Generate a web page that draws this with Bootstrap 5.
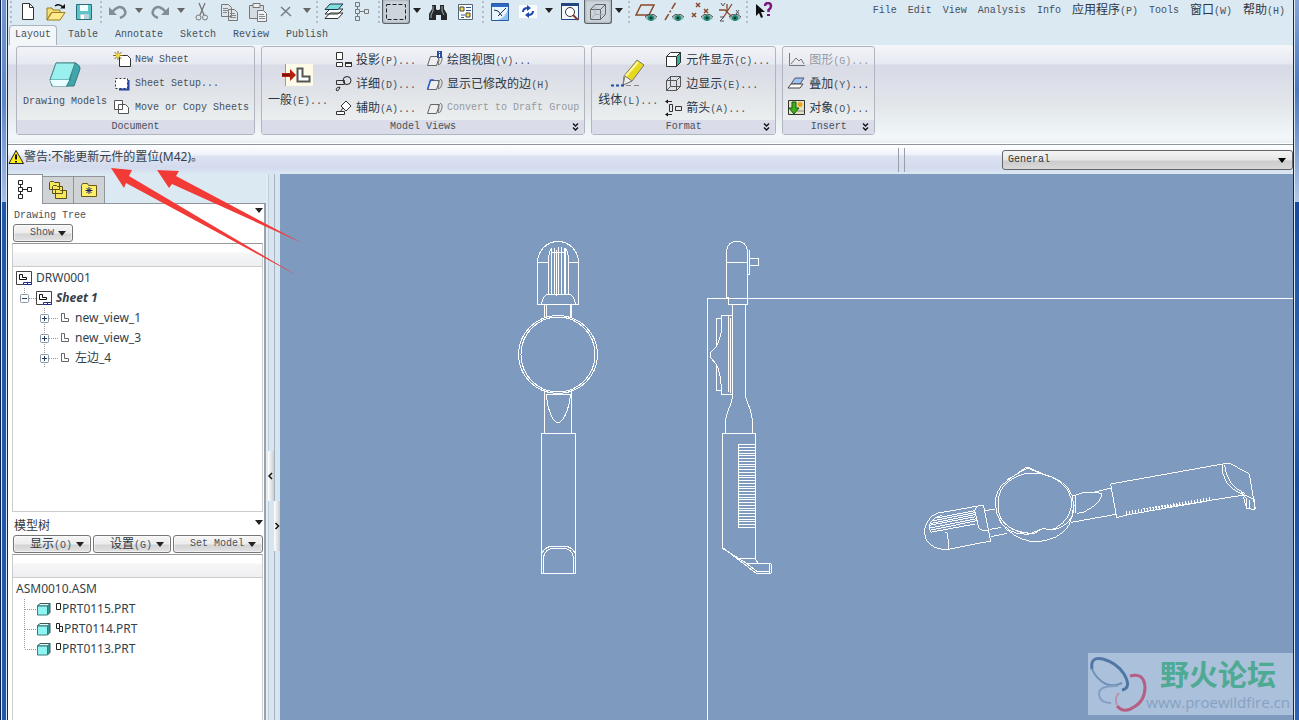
<!DOCTYPE html>
<html lang="zh-CN">
<head>
<meta charset="utf-8">
<meta name="viewport" content="width=device-width, initial-scale=1">
<title>DRW0001</title>
<link href="https://cdn.jsdelivr.net/npm/bootstrap@5.3.0/dist/css/bootstrap.min.css" rel="stylesheet">
<style>
body{font:10px/14px "Liberation Mono","Noto Sans CJK SC",monospace;color:#46515b;background:#dbe9f3;overflow:hidden}
a{color:inherit;text-decoration:none}
button{font:inherit;color:inherit;background:none;border:0;padding:0}
svg{display:block;flex:none}
.zh{font-size:12px;line-height:14px;font-family:"Noto Sans CJK SC",sans-serif;color:#2c3742}
.edge-l{width:8px;flex:none;background:linear-gradient(90deg,#0a2350 0 1px,#dbe9f8 1px 2px,transparent 2px 6px,#dbe9f8 6px 7px,#12294e 7px 8px),linear-gradient(#7795cc 0,#5c86c8 100px,#a9bfe4 202px,#2057ab 202px)}
.edge-r{width:6px;flex:none;background:linear-gradient(90deg,#12294e 0 1px,#dbe9f8 1px 2px,transparent 2px),linear-gradient(#85a5d8 0,#4a78bf 90px,#b4c8e8 202px,#174a9c 202px,#3268b5 380px,#1a4fa3 480px,#2e63b3 720px)}
.app,.canvas{min-width:0}
.work{min-height:0}
.tool-strip{height:25px}
.tool-strip .tb{width:28px;height:24px;display:flex;align-items:center;justify-content:center;overflow:hidden}
.tool-strip .tb.on{border:1px solid #5b6168;border-top:0;border-radius:0 0 3px 3px;background:#cdd5dc;box-shadow:inset 0 0 3px #8d959d}
.tool-strip .dd{width:14px;height:20px;display:flex;align-items:center;justify-content:center}
.caret{width:0;height:0;border:4px solid transparent;border-top:5px solid #222;border-bottom:0;flex:none}
.caret.dim{border-top-color:#666}
.grip{width:6px;height:24px;background:radial-gradient(circle at 3px 2px,#b3bcc6 1px,transparent 1px) 0 0/6px 5px}
.menus{gap:11px;padding-right:8px;height:21px}
.tabs-row{gap:5px;height:20px;padding-left:1px}
.tabs-row a{padding:3px 6px;height:20px}
.tabs-row a.on{border:1px solid #a9b3bb;border-bottom:0;border-radius:4px 4px 0 0;background:#f2f6f9;padding:2px 5px}
.ribbon{height:99px;padding:1px 8px 0;gap:6px;background:linear-gradient(#f4f6f9,#e6e9f2 19px,#d7dae7 20px,#e2e6ea 60px,#f2f7f9 92px,#e8eef3 98px,#fff 98px);border-radius:3px 3px 0 0}
.rpanel{border:1px solid #b1b5bf;border-radius:3px;height:89px;background:linear-gradient(#f2f3f7,#e7e9f1 17px,#d9dbe6 18px,#e0e3e8 45px,#ecefef 73px)}
.rpanel footer{height:14px;background:#dadce9;text-align:center;position:relative}
.rpanel .more{position:absolute;right:5px;top:3px}
.rbody{height:73px}
.big{padding:0 6px 8px;height:73px}
.big svg{margin-top:12px}
.big .t,.big .t .zh{line-height:20px;white-space:nowrap}
.rcol{padding:1px 5px 0 0}
.rcol button{height:24px;gap:2px;display:flex;align-items:center;white-space:nowrap}
.off,.off .zh{color:#939aa0}
.msg{height:30px;border-top:1px solid #90969e;background:linear-gradient(#fff,#eef1fa 10px,#dde2f1 11px,#d3dbee 23px,#dce8f3 29px)}
.msg .info{padding-top:2px}
.msg .dbl{width:7px;height:24px;margin-top:3px;border:solid #999fa8;border-width:0 1px;margin-right:97px}
.uitxt{font:12px/20px "Noto Sans","Noto Sans CJK SC",sans-serif;color:#333f4a}
.genwrap{margin-top:5px}
.genbox{width:291px;height:20px;border:1px solid #666;border-radius:3px;padding:0 5px;font:inherit;color:#333;background:linear-gradient(#f4f4f4,#e6e6e6 9px,#ccc 10px,#d8d8d8);appearance:none}
.genwrap::after{content:"";position:absolute;right:7px;top:8px;border:4px solid transparent;border-top:5px solid #000;border-bottom:0}
.side{width:258px;flex:none}
.stabs{height:30px}
.stabs button{width:31px;height:28px;margin-top:2px;display:flex;align-items:center;justify-content:center;border:1px solid #8f959b;border-left:0;background:#cfd3d6}
.stabs button.on{width:35px;height:30px;margin:0;background:#fff;border-width:1px 1px 0 0}
.stabs .rest{border-bottom:1px solid #8f959b}
.sbody{background:#fff;border-right:2px solid #9aa3ac;padding:0 1px 0 4px}
.ttl{padding:1px 0 0 2px}
.ttl.low{padding:2px 0 3px 2px}
.btnrow{gap:2px;padding:0 0 1px 1px}
.btnrow.first{padding-top:1px}
.gbtn{border:1px solid #777;border-radius:3px;height:18px;background:linear-gradient(#f6f6f6,#ececec 8px,#d3d3d3 9px,#e2e2e2);display:flex;align-items:center;justify-content:flex-end;padding-right:6px;gap:4px;box-shadow:inset 0 0 0 1px #fff8}
.w-show{width:60px}.w-cmd{width:78px}
.tree{border:1px solid #ccc;border-top-color:#999}
.tree.upper{height:269px}
.tree .hd{height:23px;background:linear-gradient(#fff 8px,#f6f6f7 9px,#eeeff1);border-bottom:1px solid #ccc}
.tree ul{list-style:none;margin:0;padding:1px 0 0 3px}
.tree li{display:flex;align-items:center;height:20px;white-space:nowrap}
.tree .kids{padding-left:20px}
.sash{width:14px;flex:none;background:linear-gradient(90deg,#e3edf5 0 2px,#c1cdd8 2px 3px,#d6e5f0 3px 8px,#a7b4c0 8px 9px,#d4e6f2 9px)}
.sash button{position:absolute;width:6px;height:50px;background:linear-gradient(90deg,#fff,#c9ccd0);display:flex;align-items:center}
.sash .h1b{left:2px;top:277px}.sash .h2b{right:0;top:327px}
.canvas{background:#7e9bbf;overflow:hidden}
.wm{right:0;bottom:5px;width:205px;height:62px;background:#abc0da}
.wm b{font:bold 29px/34px "Noto Sans CJK SC",sans-serif;color:#4eaa92;right:17px;top:3px;position:absolute;white-space:nowrap}
.wm span{font:15px/20px "Open Sans",sans-serif;color:#84a2c2;position:absolute;right:3px;top:39px}
.marks{left:0;top:0;pointer-events:none}
</style>
</head>
<body>
<svg width="0" height="0" class="position-absolute">
<defs>
<symbol id="eye" viewBox="0 0 12 8"><path d="M0 4Q6-2 12 4Q6 10 0 4z" fill="#8aa"/><circle cx="6" cy="4" r="3" fill="#1c8a70"/><circle cx="6" cy="4" r="1.3" fill="#032"/><path d="M0 3Q6-3 12 3" fill="none" stroke="#444"/></symbol>
<symbol id="drw" viewBox="0 0 16 16"><path d="M.5 1.500h15v13H.5z" fill="#fff" stroke="#444"/><path d="M3.500 4.500v5h7v-2h-4v-3z" fill="none" stroke="#111"/><path d="M7.500 12.500h8v2h-8zM11.500 12v2" fill="#fff" stroke="#1c2b8c"/></symbol>
<symbol id="ell" viewBox="0 0 12 12"><path d="M1.500 1.500h3v5h4v3h-7z" fill="none" stroke="#666"/></symbol>
<symbol id="plus" viewBox="0 0 24 20"><path d="M8.500 0v20" stroke="#999" stroke-dasharray="1 1"/><path d="M13 10.500h9" stroke="#999" stroke-dasharray="1 1"/><rect x="4.500" y="6.500" width="8" height="8" rx="1" fill="#fff" stroke="#8a97a6"/><path d="M6 10.500h5M8.500 8v5" stroke="#223a66"/></symbol>
<symbol id="pline" viewBox="0 0 21 20"><path d="M8.500 0v20M9 10.500h12" stroke="#999" stroke-dasharray="1 1"/></symbol>
<symbol id="prt" viewBox="0 0 14 14"><path d="M.5 4L3 1.500h10v9L10.500 13" fill="#2f9a98" stroke="#3a5a5a"/><path d="M.5 4L3 1.500h10L10.500 4z" fill="#d8ffff" stroke="#3a5a5a"/><path d="M.5 4h10v9H.5z" fill="#8ff5f2" stroke="#3a7a7a"/></symbol>
<symbol id="slab" viewBox="0 0 20 18"><path d="M5.500 5.500h9l-3 9h-9z" fill="#eee" stroke="#666"/><path d="M15 4q3 1 2 5-1 5-4 5M13 6q2 2 0 8" fill="none" stroke="#777"/></symbol>
<symbol id="chev" viewBox="0 0 7 8"><path d="M1 .5l2.500 2.500L6 .5M1 4.500L3.500 7 6 4.500" fill="none" stroke="#111" stroke-width="1.400"/></symbol>
</defs>
</svg>

<div class="d-flex vh-100 position-relative">
<div class="edge-l"></div>
<div class="app d-flex flex-column flex-fill">

<header class="tool-strip d-flex">
<div class="d-flex flex-fill" role="toolbar" aria-label="Quick tools">
<i class="grip"></i>
<button class="tb" aria-label="New"><svg width="14" height="18"><path d="M1.500.5h7l4 4v12h-11z" fill="#fff" stroke="#333"/><path d="M8.500.5v4h4" fill="none" stroke="#333"/></svg></button>
<button class="tb" aria-label="Open"><svg width="20" height="18"><path d="M1 6V5h5l1 2h7v3H5L1 17z" fill="#f4df7a" stroke="#9a7b1d"/><path d="M1 17L6 9.500h13L14 17z" fill="#ffe98a" stroke="#9a7b1d"/><path d="M9 3q4-3 8 1" fill="none" stroke="#111" stroke-width="1.500"/><path d="M14 5.500h5V1z" fill="#111"/></svg></button>
<button class="tb" aria-label="Save"><svg width="16" height="16"><path d="M.5.5h15v15H.5z" fill="#5cc4c8" stroke="#256f78"/><path d="M4 1h8v6H4z" fill="#f0ffff"/><path d="M4 10h9v5H4z" fill="#b9d4da"/><path d="M5 11h3v4H5z" fill="#fff"/></svg></button>
<i class="grip"></i>
<button class="tb" aria-label="Undo"><svg width="20" height="14"><path d="M4 7Q11-1 16 4q4 6-4 9" fill="none" stroke="#858d94" stroke-width="2.500"/><path d="M1 2v8h8z" fill="#858d94"/></svg></button>
<button class="dd" aria-label="Undo list"><i class="caret dim"></i></button>
<button class="tb" aria-label="Redo"><svg width="20" height="14"><path d="M16 7Q9-1 4 4q-4 6 4 9" fill="none" stroke="#858d94" stroke-width="2.500"/><path d="M19 2v8h-8z" fill="#858d94"/></svg></button>
<button class="dd" aria-label="Redo list"><i class="caret dim"></i></button>
<button class="tb" aria-label="Cut"><svg width="14" height="20"><path d="M4 1l5 12M10 1L5 13" stroke="#777" stroke-width="1.300"/><circle cx="3.500" cy="15.500" r="2.500" fill="none" stroke="#777"/><circle cx="10" cy="15.500" r="2.500" fill="none" stroke="#777"/></svg></button>
<button class="tb" aria-label="Copy"><svg width="18" height="20"><path d="M.5 2.500h7l3 3v9H.5zM7.500 7.500h6l3 3v8h-9z" fill="#dfe6eb" stroke="#777"/><path d="M2 6.500h5M2 8.500h5M2 10.500h4M9 11.500h5M9 13.500h6M9 15.500h6" stroke="#888"/></svg></button>
<button class="tb" aria-label="Paste"><svg width="20" height="20"><path d="M1.500 3.500h14v13h-14z" fill="#d5dce2" stroke="#777"/><path d="M5 1.500h7v4H5z" fill="#eee" stroke="#777"/><path d="M9.500 8.500h6l3 3v8h-9z" fill="#eef2f5" stroke="#777"/><path d="M11 12.500h5M11 14.500h6M11 16.500h6" stroke="#888"/></svg></button>
<button class="tb" aria-label="Delete"><svg width="12" height="12"><path d="M1 1l10 9M10 1L1 10" stroke="#767d84" stroke-width="1.500"/></svg></button>
<button class="dd" aria-label="Delete list"><i class="caret dim"></i></button>
<i class="grip"></i>
<button class="tb" aria-label="Layers"><svg width="20" height="18"><path d="M1 15.500L6 10h13l-5 5.500zM1 11L6 6h13l-5 5z" fill="#fff" stroke="#333"/><path d="M1 6.500L6 1h13l-5 5.500z" fill="#7ce0d8" stroke="#235"/></svg></button>
<button class="tb" aria-label="Tree"><svg width="14" height="20"><path d="M.5.500h4v4h-4zM.5 7.500h4v4h-4zM.5 14.500h4v4h-4zM9.500 7.500h4v4h-4zM4.500 9.500h5M2.500 4v4M2.500 11v4" fill="none" stroke="#777"/></svg></button>
<i class="grip"></i>
<button class="tb on" aria-label="Select"><svg width="20" height="16"><path d="M.5.500h19v15H.5z" fill="none" stroke="#222" stroke-dasharray="4 2"/></svg></button>
<button class="dd" aria-label="Select list"><i class="caret"></i></button>
<button class="tb" aria-label="Find"><svg width="18" height="16"><path d="M3 1h4v4l1 1h2l1-1V1h4v4l3 5v6h-6v-5H7v5H0v-6l3-5z" fill="#25282b"/><path d="M4 2v5l-2 4v3M13 2v5l2 4" stroke="#a9adb0" fill="none"/></svg></button>
<button class="tb" aria-label="Settings"><svg width="16" height="17"><path d="M.5.500h14v15h-14z" fill="#fff" stroke="#567"/><path d="M2 3h4v4H2z" fill="#f5e04a" stroke="#444"/><path d="M8 3.500h5M8 6.500h5M3 11h4M3 13.500h3" stroke="#2b55a8"/><path d="M8 9h4v4H8z" fill="#f5e04a" stroke="#444"/></svg></button>
<i class="grip"></i>
<button class="tb" aria-label="Repaint"><svg width="18" height="18"><path d="M.5.500h17v17H.5z" fill="#eaf6ff" stroke="#2a5aa5"/><path d="M1 1h16v3H1z" fill="#2f69c0"/><path d="M6 17q9-2 11-12v12z" fill="#8fc4ee"/><path d="M3 7l4 1 4 5M7 13l8-8" stroke="#234" fill="none"/></svg></button>
<button class="tb" aria-label="Refresh"><svg width="18" height="16"><path d="M0 1h18v13H0z" fill="#fbfdff"/><path d="M4 8q0-4 5-4M14 7q0 4-5 4" fill="none" stroke="#1c4aa8" stroke-width="2"/><path d="M8 1v6l4-3zM10 8v6l-4-3z" fill="#1c4aa8"/></svg></button>
<button class="dd" aria-label="Refresh list"><i class="caret"></i></button>
<button class="tb" aria-label="Zoom"><svg width="18" height="18"><path d="M.5.500h17v16H.5z" fill="#f4f8fb" stroke="#24457f"/><path d="M0 0h18v3H0z" fill="#24457f"/><circle cx="9" cy="9" r="4.500" fill="#fff" stroke="#333"/><path d="M12 12l5 5" stroke="#8c3b22" stroke-width="2"/></svg></button>
<button class="tb on" aria-label="Wireframe"><svg width="16" height="16"><path d="M.5 5.500h10v10H.5zM.5 5.500L5 .5h10.500l-5 5M15.500.5v10l-5 5" fill="none" stroke="#666"/><path d="M5 .5v10M5 10.500h10M5 10.500l-4.500 5" fill="none" stroke="#a9b0b6"/></svg></button>
<button class="dd" aria-label="Display list"><i class="caret"></i></button>
<i class="grip"></i>
<button class="tb" aria-label="Planes"><svg width="22" height="20"><path d="M1 13L6 3h13l-5 10z" fill="none" stroke="#8a4a2a" stroke-width="1.500"/><use href="#eye" x="10" y="12" width="12" height="8"/></svg></button>
<button class="tb" aria-label="Axes"><svg width="20" height="20"><path d="M1 18L12 0" stroke="#8a4a2a" stroke-width="1.500" stroke-dasharray="7 2 2 2"/><use href="#eye" x="8" y="12" width="12" height="8"/></svg></button>
<button class="tb" aria-label="Points"><svg width="22" height="20"><path d="M5 1l4 4M9 1L5 5M1 11l4 4M5 11l-4 4M13 7l4 4M17 7l-4 4" stroke="#8a4a2a" stroke-width="1.500"/><use href="#eye" x="10" y="12" width="12" height="8"/></svg></button>
<button class="tb" aria-label="Coordinate systems"><svg width="22" height="20"><path d="M0 8h6l8 8M4 16L13 2M8 2v7" stroke="#8a4a2a" stroke-width="1.300" fill="none"/><path d="M2 1l2 3 2-3M17 8l3 4M20 8l-3 4M1 15h4l-4 4h4" stroke="#555" fill="none"/><use href="#eye" x="10" y="12" width="12" height="8"/></svg></button>
<i class="grip"></i>
<button class="tb pb-1" aria-label="Help pointer"><svg width="18" height="16"><path d="M1 2v12l3-3 2 5 2-1-2-5h4z" fill="#111"/><path d="M10 4q0-3 3-3t3 3q0 2-2.500 4v2" fill="none" stroke="#7a1778" stroke-width="2.500"/><path d="M12 12h3v2h-3z" fill="#7a1778"/></svg></button>
</div>
<nav class="menus d-flex align-items-center text-nowrap">
<a href="#">File</a><a href="#">Edit</a><a href="#">View</a><a href="#">Analysis</a><a href="#">Info</a><a href="#"><span class="zh">应用程序</span>(P)</a><a href="#">Tools</a><a href="#"><span class="zh">窗口</span>(W)</a><a href="#"><span class="zh">帮助</span>(H)</a>
</nav>
</header>

<nav class="tabs-row d-flex"><a class="on" href="#">Layout</a><a href="#">Table</a><a href="#">Annotate</a><a href="#">Sketch</a><a href="#">Review</a><a href="#">Publish</a></nav>

<section class="ribbon d-flex">
<div class="rpanel"><div class="rbody d-flex">
<button class="big d-flex flex-column align-items-center justify-content-between"><svg width="34" height="30"><path d="M8 4h20l-4 19-4 4H4l-2-6z" fill="#86e6e4" stroke="#4a8a8c"/><path d="M26 4q6 1 6 6l-6 17h-8l4-6z" fill="#3fa7ab" stroke="#35787c"/><path d="M8 4h19l-6 17H2z" fill="#9af0ee" stroke="#4a8a8c"/><path d="M2 21h19l-3 6H5z" fill="#eaffff"/></svg><span class="t">Drawing Models</span></button>
<div class="rcol">
<button><svg width="20" height="18"><path d="M6.500 4.500h8l3 3v8h-11z" fill="#fff" stroke="#333"/><path d="M5 0v9M0 4.500h10M1.500 1l7 7M8.500 1l-7 7" stroke="#8a6a12"/><circle cx="5" cy="4.500" r="2" fill="#f5d92a"/></svg>New Sheet</button>
<button><svg width="20" height="18"><path d="M2.500 3.500h12v10h-12z" fill="#fff" stroke="#333" stroke-dasharray="2 2"/><path d="M15.500 5v9.500H6" fill="none" stroke="#2746a0" stroke-width="2"/></svg>Sheet Setup...</button>
<button><svg width="20" height="18"><path d="M1.500 1.500h8v9h-8zM5.500 5.500h7l3 3v6h-10z" fill="#fff" stroke="#555"/></svg>Move or Copy Sheets</button>
</div></div><footer>Document</footer></div>

<div class="rpanel"><div class="rbody d-flex">
<button class="big d-flex flex-column align-items-center justify-content-between"><svg width="32" height="30"><path d="M3 5h28v22H3z" fill="#fdfbe8"/><path d="M3.500 5v22" stroke="#999"/><path d="M15.500 9.500h5v8h7v5h-12z" fill="#fff" stroke="#555" stroke-width="2"/><path d="M0 14h8v-4l6 6-6 6v-4H0z" fill="#b8200c"/><path d="M0 16h8" stroke="#400"/></svg><span class="t"><span class="zh">一般</span>(E)...</span></button>
<div class="rcol">
<button><svg width="20" height="18"><path d="M2.500 1.500h6v7h-6zM2.500 11.500h6v4h-6zM11.500 11.500h6v4h-6z" fill="#fff" stroke="#333"/><path d="M11 11h7v2h-7z" fill="#333"/></svg><span><span class="zh">投影</span>(P)...</span></button>
<button><svg width="20" height="18"><circle cx="13" cy="5.500" r="4" fill="none" stroke="#222"/><path d="M2.500 5.500h8v4h-8zM2 15q0-3 4-3-1 4-3 4z" fill="none" stroke="#333"/></svg><span><span class="zh">详细</span>(D)...</span></button>
<button><svg width="20" height="18"><path d="M7 7l5-5 5 5-5 5zM2.500 12.500h8v3h-8zM9 9l-3 4" fill="#fff" stroke="#333"/></svg><span><span class="zh">辅助</span>(A)...</span></button>
</div>
<div class="rcol">
<button class="ps-1"><svg width="20" height="18"><use href="#slab" width="20" height="18"/><path d="M12 0h5v7h-5z" fill="#2b4f9d"/><path d="M14.500 1v1M14.500 3v3" stroke="#fff"/></svg><span><span class="zh">绘图视图</span>(V)...</span></button>
<button class="ps-1"><svg width="20" height="18"><use href="#slab" width="20" height="18"/><path d="M2.500 14.500L5.500 5H9" fill="none" stroke="#2a5bd0" stroke-width="1.500"/></svg><span><span class="zh">显示已修改的边</span>(H)</span></button>
<button class="ps-1 off"><svg width="20" height="18"><use href="#slab" width="20" height="18"/></svg>Convert to Draft Group</button>
</div></div><footer>Model Views<svg class="more" width="7" height="8"><use href="#chev"/></svg></footer></div>

<div class="rpanel"><div class="rbody d-flex">
<button class="big d-flex flex-column align-items-center justify-content-between"><svg width="34" height="30"><path d="M13 17L26 1l7 5-12 16-9 4z" fill="#e8d820" stroke="#777"/><path d="M14 18L27 3" stroke="#fff99a" stroke-width="2"/><path d="M12 26l2-9 7 5z" fill="#eee" stroke="#777"/><path d="M0 26.500h14" stroke="#1c4fa8" stroke-width="2" stroke-dasharray="3 2"/><path d="M15 26.500h16" stroke="#888" stroke-dasharray="5 3"/></svg><span class="t"><span class="zh">线体</span>(L)...</span></button>
<div class="rcol">
<button><svg width="20" height="18"><path d="M2.500 5.500h10v10h-10zM2.500 5.500l4-4h10l-4 4" fill="#fff" stroke="#333"/><path d="M16.500 1.500v10l-4 4v-10z" fill="#2db09a" stroke="#333"/></svg><span><span class="zh">元件显示</span>(C)...</span></button>
<button><svg width="20" height="18"><path d="M2.500 5.500h10v10h-10zM2.500 5.500l4-4h10l-4 4M16.500 1.500v10l-4 4M6.500 1.500v10h10M6.500 11.500l-4 4" fill="none" stroke="#555"/></svg><span><span class="zh">边显示</span>(E)...</span></button>
<button><svg width="20" height="18"><path d="M2 2.500h6M2 15.500h6M5.500 5.500h3v7h-3zM11.500 7.500h6v4h-6z" fill="none" stroke="#333"/><path d="M1 2.500l3-2v4zM1 15.500l3-2v4z" fill="#111"/></svg><span><span class="zh">箭头</span>(A)...</span></button>
</div></div><footer>Format<svg class="more" width="7" height="8"><use href="#chev"/></svg></footer></div>

<div class="rpanel"><div class="rbody d-flex ps-1">
<div class="rcol">
<button class="off"><svg width="20" height="18"><path d="M2.500 2v12.500H18M4 13l5-6 3 3 2-2 3 5" fill="none" stroke="#777"/></svg><span><span class="zh">图形</span>(G)...</span></button>
<button><svg width="20" height="18"><path d="M4 9l4-6h9l-4 6z" fill="#9cc3f2" stroke="#556"/><path d="M1 13l3-4h12l-3 4z" fill="#fff" stroke="#444"/></svg><span><span class="zh">叠加</span>(Y)...</span></button>
<button><svg width="20" height="18"><path d="M1.500 1.500h16v14h-16z" fill="#e6e3c5" stroke="#333"/><circle cx="13" cy="5.500" r="2.500" fill="#e9a61c"/><path d="M10 12h7" stroke="#888"/><path d="M5 3h4v6h3l-5 6-5-6h3z" fill="#3cb01c" stroke="#16590a"/></svg><span><span class="zh">对象</span>(O)...</span></button>
</div></div><footer>Insert<svg class="more" width="7" height="8"><use href="#chev"/></svg></footer></div>
</section>

<div class="msg d-flex align-items-start">
<div class="info flex-fill d-flex align-items-center" role="status"><svg width="16" height="16"><path d="M8 1.500L15.500 14.500H1z" fill="#ffee12" stroke="#222"/><path d="M8 5.500v5M8 12v1.500" stroke="#111" stroke-width="2"/></svg><span class="uitxt">警告:不能更新元件的置位(M42)。</span></div>
<div class="dbl"></div>
<div class="genwrap position-relative"><select class="genbox" aria-label="Selection filter"><option>General</option></select></div>
</div>

<main class="work d-flex flex-fill">
<aside class="side d-flex flex-column">
<div class="stabs d-flex">
<button class="on" aria-label="Model tree"><svg width="14" height="20"><path d="M.5.500h4v4h-4zM.5 7.500h4v4h-4zM.5 14.500h4v4h-4zM9.500 7.500h4v4h-4zM4.500 9.500h5M2.500 4v4M2.500 11v4" fill="none" stroke="#222"/></svg></button>
<button aria-label="Folders"><svg width="20" height="20"><path d="M1.500 9.500v-7l1-1h3l1 1h5v7zM4.500 13.500v-7l1-1h3l1 1h5v7zM7.500 18.500v-8l1-1h3l1 1h6v8z" fill="#f6e660" stroke="#5a5018"/></svg></button>
<button aria-label="Favorites"><svg width="18" height="16"><path d="M1.500 14.500v-11l1-2h5l1 2h8v11z" fill="#ffef6a" stroke="#6a5a14"/><path d="M9 5v7M5.500 8.500h7M6.500 6l5 5M11.500 6l-5 5" stroke="#14236e"/></svg></button>
<div class="rest flex-fill"></div>
</div>
<div class="sbody flex-fill d-flex flex-column">
<div class="d-flex justify-content-between pt-1"><span class="ttl">Drawing Tree</span><i class="caret"></i></div>
<div class="btnrow first d-flex"><button class="gbtn w-show">Show<i class="caret"></i></button></div>
<div class="tree upper"><div class="hd"></div>
<ul class="uitxt">
<li><svg class="me-1" width="16" height="16"><use href="#drw"/></svg>DRW0001</li>
<li><svg width="20" height="20"><path d="M8.500 0v6M13 10.500h7" stroke="#999" stroke-dasharray="1 1"/><rect x="4.500" y="6.500" width="8" height="8" rx="1" fill="#fff" stroke="#8a97a6"/><path d="M6 10.500h5" stroke="#223a66"/></svg><svg class="me-1" width="16" height="16"><use href="#drw"/></svg><b><i>Sheet 1</i></b></li>
<li class="kids"><svg width="24" height="20"><use href="#plus"/></svg><svg width="15" height="12"><use href="#ell" width="12" height="12"/></svg>new_view_1</li>
<li class="kids"><svg width="24" height="20"><use href="#plus"/></svg><svg width="15" height="12"><use href="#ell" width="12" height="12"/></svg>new_view_3</li>
<li class="kids"><svg width="24" height="20"><use href="#plus"/></svg><svg width="15" height="12"><use href="#ell" width="12" height="12"/></svg>左边_4</li>
</ul></div>
<div class="d-flex justify-content-between pt-1"><span class="zh ttl low">模型树</span><i class="caret mt-1"></i></div>
<div class="btnrow d-flex"><button class="gbtn w-cmd"><span><span class="zh">显示</span>(O)</span><i class="caret"></i></button><button class="gbtn w-cmd"><span><span class="zh">设置</span>(G)</span><i class="caret"></i></button><button class="gbtn flex-fill">Set Model<i class="caret"></i></button></div>
<div class="tree flex-fill border-bottom-0"><div class="hd"></div>
<ul class="uitxt">
<li>ASM0010.ASM</li>
<li><svg width="21" height="20"><use href="#pline"/></svg><svg class="me-1" width="14" height="14"><use href="#prt"/></svg><svg width="7" height="14"><path d="M1.500 1.500h4v6h-4z" fill="none" stroke="#222"/></svg>PRT0115.PRT</li>
<li><svg width="21" height="20"><use href="#pline"/></svg><svg class="me-1" width="14" height="14"><use href="#prt"/></svg><svg width="9" height="14"><path d="M1.500 1.500h3v5h-3zM4.500 4.500h3v5h-3z" fill="none" stroke="#222"/></svg>PRT0114.PRT</li>
<li><svg width="21" height="20"><path d="M8.500 0v10M9 10.500h12" stroke="#999" stroke-dasharray="1 1"/></svg><svg class="me-1" width="14" height="14"><use href="#prt"/></svg><svg width="7" height="14"><path d="M1.500 1.500h4v6h-4z" fill="none" stroke="#222"/></svg>PRT0113.PRT</li>
</ul></div>
</div>
</aside>
<div class="sash position-relative"><button class="h1b" aria-label="Collapse tree"><svg width="6" height="8"><path d="M4 1L1 4l3 3" fill="none" stroke="#111" stroke-width="1.500"/></svg></button><button class="h2b" aria-label="Expand browser"><svg width="6" height="8"><path d="M1.500 1l3 3-3 3" fill="none" stroke="#111" stroke-width="1.500"/></svg></button></div>
<div class="canvas flex-fill position-relative">
<svg width="100%" height="100%" viewBox="280 174 1013 546" preserveAspectRatio="xMinYMin meet" fill="none" stroke="#fff" shape-rendering="crispEdges">
<path d="M1293 298.500H707.500V720"/>
<!-- front view -->
<path d="M537.500 304.500V262.500a20.500 21 0 0 1 41 0v42zM537.500 262.500h11M568.500 262.500h10M548.500 294.500V261q0-10 3.500-12.500M568.500 294.500V261q0-10-3.500-12.500M551.500 248v47M554.500 248v47M556.500 250v46M558.500 247v47M561.500 247v48M564.500 248v47M565.500 249v46M551 252.500h15M541.500 304q1-7 5-9.500h24q4 3 5 9.500M544.500 304v14M546.500 304v13M570.500 304v13M571.500 304v14M544.500 390v43M571.500 390v43M546 394.500h25M546.500 395c1 14 6 27.500 11.500 27.500S569 409 570.500 395"/>
<ellipse cx="558" cy="354.500" rx="39.500" ry="39"/><ellipse cx="558" cy="354.500" rx="37" ry="37.500"/>
<path d="M541.500 433.500h34v140h-34zM541.500 554q4-8 11-7.500h12q7-.5 11 7.500M543.500 573V557q2-8.500 10-8.500h10q8 0 10 8.500v16"/>
<!-- side view -->
<path d="M728.500 304.500V297h-2V251q1-9.500 10.500-9.500t10.500 9.500V304.500zM726.500 262.500h21M749.500 250v24h-2M749.500 258.500h8.500v7h-8.500M732.500 304v12M745.500 304v90q0 5 3 11 4 10 4 19v9M732.500 315.500h-11v15q-1 7-5 16l-6 6v5l6 7q5 10 5 30h11v-79M728.500 316v76M721 318.500h-4.500v26M716.500 364v26.500h5M730.500 318v75M732.500 394q0 5-2 11-5 10-5 19v9"/>
<path d="M721.500 433.500h34v126l3 4h12q1 0 1 2v6q0 2-2 2h-13l-34-26v-114M722 548l24 15 11 8.500h12M738 558.500h17M747 563.500h12M769.500 563v10M738.500 443.500v84"/>
<path d="M747 444v83.500" stroke-width="17" stroke-dasharray="1 2 1 2 1 2 1 1"/>
<!-- trimetric view -->
<g transform="translate(910 450) scale(.33333)" stroke-width="3">
<path d="M220 165l22 108-127 25q-48 2-66-28-14-36 11-65 15-17 38-18zM62 216q10-14 35-20M62 216q-8 22 4 34M105 246l7 2 5 50M66 246L195 222M64 240L200 212M60 234L200 206M58 226L196 200M64 220L194 194M70 212L194 188M80 204L194 182M194 180l10-12 16-3M194 182l12 50q6 12 30 10M225 182l30-5M240 238l32-5M242 260l50-10"/>
<path d="M256 165Q254 120 288 95L345 54q8-6 18 2L400 72Q470 90 488 140q6 30-2 60-10 55-80 72-50 10-90-15-55-30-60-92zM264 165q0-50 36-74 40-28 92-20 75 15 92 75 6 60-50 90-8 4-36 0-16 6-34 14-50-2-80-30-22-26-20-55zM262 195q22 60 90 58 26 0 46-18 34 10 60-6 36-22 34-66M290 90l62-36 40 16M268 200q30 48 90 50"/>
<path d="M488 138l30-10h30l54-14M484 217l134-24M498 134v56M500 190q20 0 40-14 40-26 34-46l-26-4M490 160q10 10 8 30"/>
<path d="M602 102L938 42M602 102l18 101 30-8 250-44 90-14M940 42l20-2 58 32 18 106-26-2-10-36M936 44q-2 64 64 90l34 14M944 44q4 62 60 86M990 137q14-3 20 10v30M1020 150v28M1034 150v28M1000 134l-6-8"/>
<path d="M648 190L900 148" stroke-width="12" stroke-dasharray="4 5"/>
</g>
</svg>
<div class="wm position-absolute"><svg width="62" height="62" viewBox="0 0 62 62" fill="none"><path d="M4 16Q2 3 15 6q14 4 21 15 8 14-2 16" stroke="#5076a6" stroke-width="3"/><path d="M4 16Q8 26 18 31q8 3 16-1" stroke="#6c8fb8" stroke-width="2"/><path d="M30 33q-20-1-19 9 1 8 12 8" stroke="#839fc4" stroke-width="2"/><path d="M42 23q14-4 15 11 0 14-11 20-10 7-17-1" stroke="#b65f84" stroke-width="3"/><path d="M29 52q-3-7 2-12" stroke="#b991ad" stroke-width="2"/></svg><b>野火论坛</b><span>www.proewildfire.cn</span></div>
</div>
</main>
</div>
<div class="edge-r"></div>
<svg class="marks position-absolute" width="310" height="290" fill="#f23a36"><path d="M111 168l21 2-3 6 169 100L126 183l-2 5zM157 170l22 1-3 5 126 67L172 184l-3 4z"/></svg>
</div>
<script src="https://cdn.jsdelivr.net/npm/bootstrap@5.3.0/dist/js/bootstrap.bundle.min.js"></script>
</body>
</html>
